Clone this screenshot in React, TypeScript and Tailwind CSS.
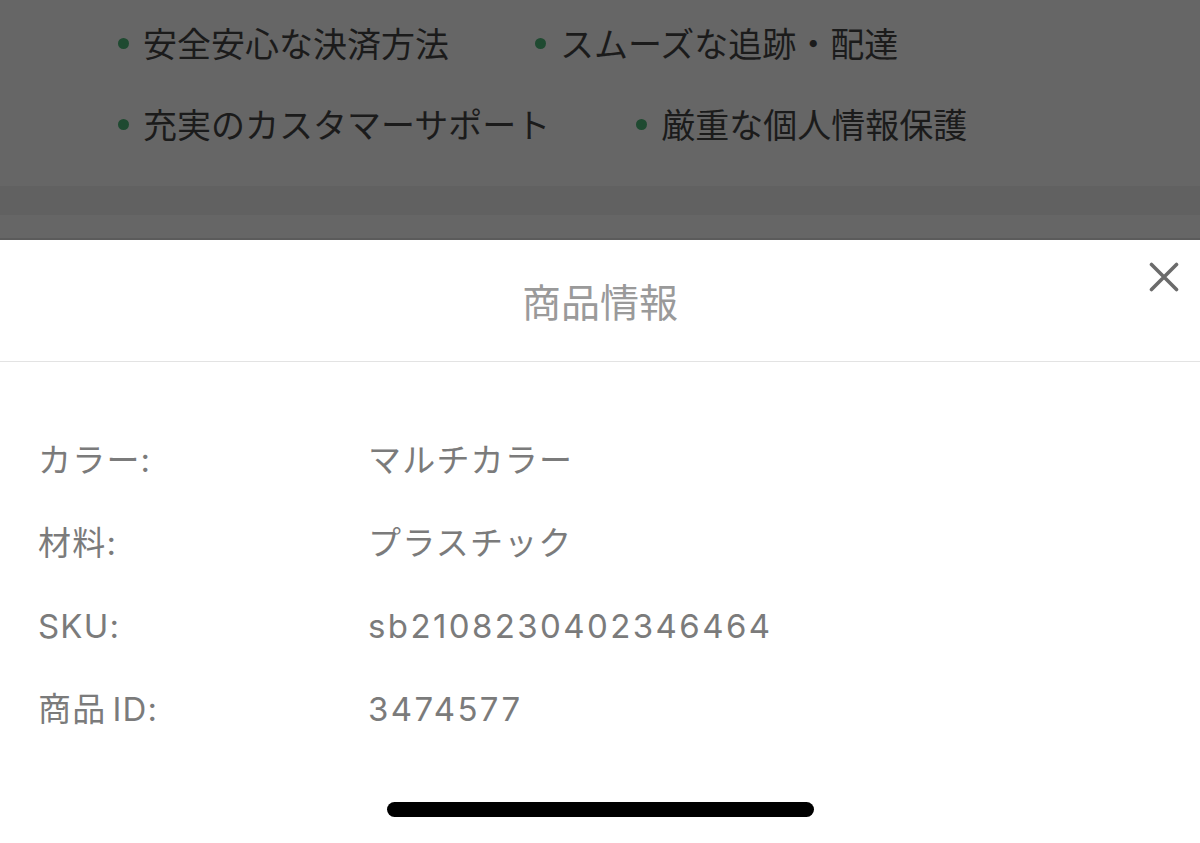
import React from "react";

const font = { fontFamily: '"Noto Sans CJK JP", "Noto Sans", sans-serif' };
const rowFont = { fontFamily: 'Inter, "Noto Sans CJK JP", sans-serif' };

function Bullet({ text }: { text: string }) {
  return (
    <div className="flex items-center h-[81px]">
      <span className="w-[11px] h-[11px] rounded-full bg-[#1f4a31] mr-[14px] mt-[2px]" />
      <span className="text-[34px] leading-none text-[#1b1b1b]">{text}</span>
    </div>
  );
}

function Row({ label, value, latin }: { label: React.ReactNode; value: string; latin?: boolean }) {
  return (
    <div className="flex items-center h-[83px] text-[33px] text-[#7b7b7b] leading-none tracking-[1.2px]" style={rowFont}>
      <div className="w-[330px]">{label}</div>
      <div className={latin ? "tracking-[2.4px]" : ""}>{value}</div>
    </div>
  );
}

export default function App() {
  return (
    <div className="w-[1200px] h-[843px] flex flex-col bg-white overflow-hidden" style={font}>
      <div className="h-[240px] flex flex-col bg-[#666666]">
        <div className="pl-[118px] pt-[2px] w-[1040px] flex flex-wrap gap-x-[86px]">
          <Bullet text="安全安心な決済方法" />
          <Bullet text="スムーズな追跡・配達" />
          <Bullet text="充実のカスタマーサポート" />
          <Bullet text="厳重な個人情報保護" />
        </div>
        <div className="flex-1" />
        <div className="h-[29px] bg-[#616161]" />
        <div className="h-[23px] bg-[#666666]" />
        <div className="h-[2px] bg-[#5b5b5b]" />
      </div>
      <div className="h-[122px] relative flex items-center justify-center border-b border-[#e3e3e3]">
        <span className="text-[39px] text-[#9a9a9a] leading-none">商品情報</span>
        <svg className="absolute right-[21px] top-[22px]" width="30" height="30" viewBox="0 0 30 30">
          <path d="M2.5 2.5 L27.5 27.5 M27.5 2.5 L2.5 27.5" stroke="#6b6b6b" strokeWidth="3.6" strokeLinecap="round" />
        </svg>
      </div>
      <div className="pt-[57px] pl-[38px] flex flex-col">
        <Row label="カラー:" value="マルチカラー" />
        <Row label="材料:" value="プラスチック" />
        <Row label="SKU:" value="sb2108230402346464" latin />
        <Row
          label={
            <>
              商品<span className="ml-[6px]">ID:</span>
            </>
          }
          value="3474577"
          latin
        />
      </div>
      <div className="flex justify-center mt-[51px]">
        <div className="w-[427px] h-[15px] rounded-full bg-black" />
      </div>
    </div>
  );
}
